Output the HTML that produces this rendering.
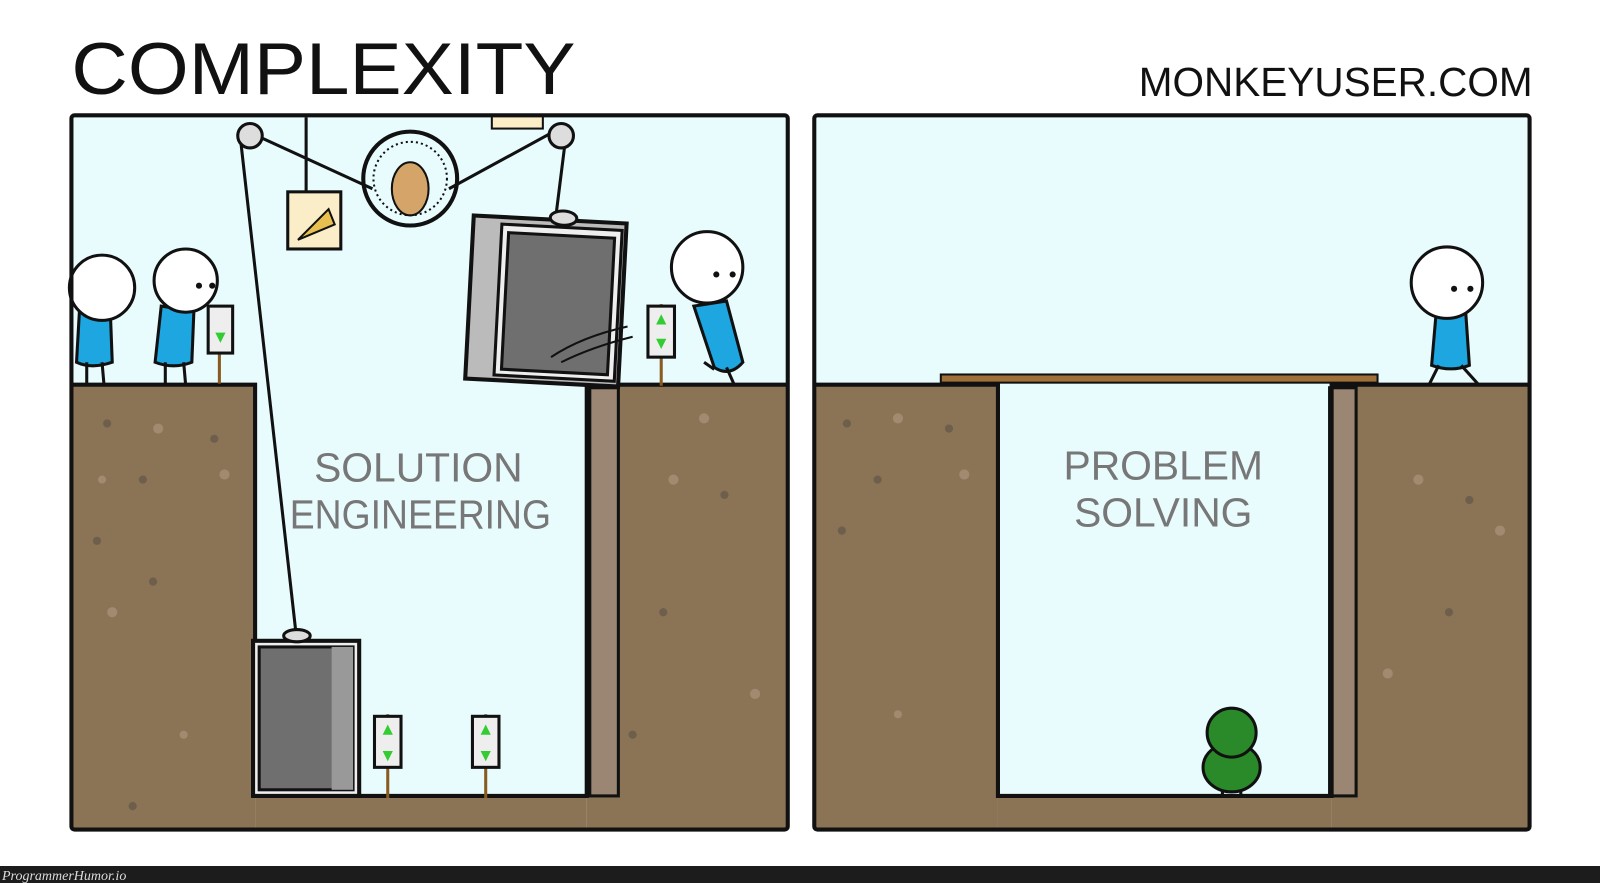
<!DOCTYPE html>
<html><head><meta charset="utf-8"><style>
html,body{margin:0;padding:0;background:#fff;width:1600px;height:883px;overflow:hidden}
svg{display:block}
</style></head><body>
<svg width="1600" height="883" viewBox="0 0 1600 883" xmlns="http://www.w3.org/2000/svg" font-family="'Liberation Sans', sans-serif">
<rect width="1600" height="883" fill="#fff"/>
<g transform="scale(1.0204)">
<text x="70" y="92" font-size="72" fill="#111" textLength="494" lengthAdjust="spacingAndGlyphs" stroke="#fff" stroke-width="3" paint-order="stroke">COMPLEXITY</text>
<text x="1116" y="94" font-size="40" fill="#111" textLength="386" lengthAdjust="spacingAndGlyphs">MONKEYUSER.COM</text>

<!-- Panel 1 -->
<rect x="70" y="113" width="702" height="700" fill="#e8fbfd"/>
<rect x="70" y="377" width="180" height="436" fill="#8b7355"/>
<rect x="575" y="377" width="197" height="436" fill="#8b7355"/>
<rect x="250" y="780" width="325" height="33" fill="#8b7355"/>
<rect x="578" y="380" width="28" height="400" fill="#9a8672" stroke="#111" stroke-width="3"/>
<path d="M70 377 L250 377 L250 780 L575 780 L575 377 L772 377" fill="none" stroke="#111" stroke-width="4"/>
<g fill="#a08a70"><circle cx="155" cy="420" r="5"/><circle cx="100" cy="470" r="4"/><circle cx="220" cy="465" r="5"/><circle cx="110" cy="600" r="5"/><circle cx="660" cy="470" r="5"/><circle cx="690" cy="410" r="5"/><circle cx="740" cy="680" r="5"/><circle cx="180" cy="720" r="4"/></g>
<g fill="#6e5e4c"><circle cx="105" cy="415" r="4"/><circle cx="210" cy="430" r="4"/><circle cx="140" cy="470" r="4"/><circle cx="95" cy="530" r="4"/><circle cx="150" cy="570" r="4"/><circle cx="710" cy="485" r="4"/><circle cx="650" cy="600" r="4"/><circle cx="620" cy="720" r="4"/><circle cx="130" cy="790" r="4"/></g>
<path d="M235 130 L290 620 M245 130 L365 185 M440 185 L550 125 M555 130 L545 210 M300 115 L300 190" stroke="#111" stroke-width="3" fill="none"/>
<circle cx="245" cy="133" r="12" fill="#ddd" stroke="#111" stroke-width="3"/>
<circle cx="550" cy="133" r="12" fill="#ddd" stroke="#111" stroke-width="3"/>
<rect x="482" y="113" width="50" height="13" fill="#fbedc8" stroke="#111" stroke-width="2"/>
<rect x="282" y="188" width="52" height="56" fill="#fbedc8" stroke="#111" stroke-width="3"/>
<path d="M292 235 L322 205 L328 220 Z" fill="#e8c050" stroke="#111" stroke-width="2"/>
<circle cx="402" cy="175" r="46" fill="none" stroke="#111" stroke-width="4"/>
<circle cx="402" cy="175" r="36" fill="none" stroke="#111" stroke-width="2" stroke-dasharray="2 3"/>
<ellipse cx="402" cy="185" rx="18" ry="26" fill="#d4a468" stroke="#111" stroke-width="2"/>
<g transform="rotate(3 535 295)">
<rect x="460" y="215" width="150" height="160" fill="#bbb" stroke="#111" stroke-width="4"/>
<rect x="488" y="222" width="118" height="148" fill="#eee" stroke="#111" stroke-width="3"/>
<rect x="495" y="230" width="104" height="134" fill="#6f6f6f" stroke="#111" stroke-width="3"/>
<ellipse cx="548" cy="213" rx="13" ry="7" fill="#ddd" stroke="#111" stroke-width="3"/>
</g>
<path d="M540 350 Q570 330 615 320 M550 355 Q580 340 620 330" stroke="#111" stroke-width="2" fill="none"/>
<rect x="248" y="628" width="104" height="152" fill="#eee" stroke="#111" stroke-width="4"/>
<rect x="254" y="634" width="92" height="140" fill="#6f6f6f" stroke="#111" stroke-width="3"/>
<rect x="325" y="634" width="21" height="140" fill="#999"/>
<ellipse cx="291" cy="623" rx="13" ry="6" fill="#ddd" stroke="#111" stroke-width="3"/>
<g stroke="#111" stroke-width="3">
<line x1="380" y1="700" x2="380" y2="782" stroke="#8a5a20"/>
<rect x="367" y="702" width="26" height="50" fill="#eee"/>
<line x1="476" y1="700" x2="476" y2="782" stroke="#8a5a20"/>
<rect x="463" y="702" width="26" height="50" fill="#eee"/>
<line x1="648" y1="298" x2="648" y2="378" stroke="#8a5a20"/>
<rect x="635" y="300" width="26" height="50" fill="#eee"/>
<line x1="215" y1="300" x2="215" y2="376" stroke="#8a5a20"/>
<rect x="204" y="300" width="24" height="46" fill="#eee"/>
</g>
<g fill="#3c3"><path d="M375 720 L385 720 L380 710Z M375 736 L385 736 L380 746Z M471 720 L481 720 L476 710Z M471 736 L481 736 L476 746Z M643 318 L653 318 L648 308Z M643 332 L653 332 L648 342Z M211 326 L221 326 L216 336Z"/></g>
<g stroke="#111" stroke-width="3">
<path d="M78 302 L75 355 Q90 362 110 355 L108 302Z" fill="#1da6e0"/>
<circle cx="100" cy="282" r="32" fill="#fff"/>
<path d="M85 355 L85 378 M100 355 L102 378" />
<path d="M158 300 L152 355 Q170 362 188 355 L190 305Z" fill="#1da6e0"/>
<circle cx="182" cy="275" r="31" fill="#fff"/>
<path d="M162 355 L162 378 M180 355 L182 378"/>
<path d="M680 300 L700 360 Q715 370 728 355 L712 295Z" fill="#1da6e0"/>
<circle cx="693" cy="262" r="35" fill="#fff"/>
<path d="M712 360 L720 378 M700 362 L690 355"/>
</g>
<g fill="#111"><circle cx="702" cy="269" r="3"/><circle cx="718" cy="269" r="3"/><circle cx="195" cy="280" r="3"/><circle cx="208" cy="280" r="3"/></g>
<text x="410" y="472" font-size="40" fill="#777" text-anchor="middle">SOLUTION</text>
<text x="412" y="518" font-size="40" fill="#777" text-anchor="middle" textLength="256" lengthAdjust="spacingAndGlyphs">ENGINEERING</text>
<rect x="70" y="113" width="702" height="700" rx="3" fill="none" stroke="#111" stroke-width="4"/>

<!-- Panel 2 -->
<rect x="798" y="113" width="701" height="700" fill="#e8fbfd"/>
<rect x="798" y="377" width="180" height="436" fill="#8b7355"/>
<rect x="1305" y="377" width="194" height="436" fill="#8b7355"/>
<rect x="978" y="780" width="327" height="33" fill="#8b7355"/>
<rect x="1303" y="380" width="26" height="400" fill="#9a8672" stroke="#111" stroke-width="3"/>
<path d="M798 377 L978 377 L978 780 L1305 780 L1305 377 L1499 377" fill="none" stroke="#111" stroke-width="4"/>
<g fill="#a08a70"><circle cx="880" cy="410" r="5"/><circle cx="945" cy="465" r="5"/><circle cx="1390" cy="470" r="5"/><circle cx="1470" cy="520" r="5"/><circle cx="1360" cy="660" r="5"/><circle cx="880" cy="700" r="4"/></g>
<g fill="#6e5e4c"><circle cx="830" cy="415" r="4"/><circle cx="930" cy="420" r="4"/><circle cx="860" cy="470" r="4"/><circle cx="825" cy="520" r="4"/><circle cx="1440" cy="490" r="4"/><circle cx="1420" cy="600" r="4"/></g>
<rect x="922" y="367" width="428" height="8" fill="#a0703a" stroke="#111" stroke-width="2"/>
<g stroke="#111" stroke-width="3">
<path d="M1408 300 L1403 358 Q1422 365 1440 358 L1436 300Z" fill="#1da6e0"/>
<circle cx="1418" cy="277" r="35" fill="#fff"/>
<path d="M1410 358 L1400 378 M1432 358 L1450 378"/>
<ellipse cx="1207" cy="752" rx="28" ry="24" fill="#2a8a2a"/>
<circle cx="1207" cy="718" r="24" fill="#2a8a2a"/>
<path d="M1198 774 L1198 782 M1216 774 L1216 782"/>
</g>
<g fill="#111"><circle cx="1425" cy="283" r="3"/><circle cx="1441" cy="283" r="3"/></g>
<text x="1140" y="470" font-size="40" fill="#777" text-anchor="middle">PROBLEM</text>
<text x="1140" y="516" font-size="40" fill="#777" text-anchor="middle">SOLVING</text>
<rect x="798" y="113" width="701" height="700" rx="3" fill="none" stroke="#111" stroke-width="4"/>
</g>
<rect x="0" y="866" width="1600" height="17" fill="#1c1c1c"/>
<text x="2" y="880" font-size="14" font-style="italic" font-family="'Liberation Serif', serif" fill="#ddd">ProgrammerHumor.io</text>
</svg>
</body></html>
